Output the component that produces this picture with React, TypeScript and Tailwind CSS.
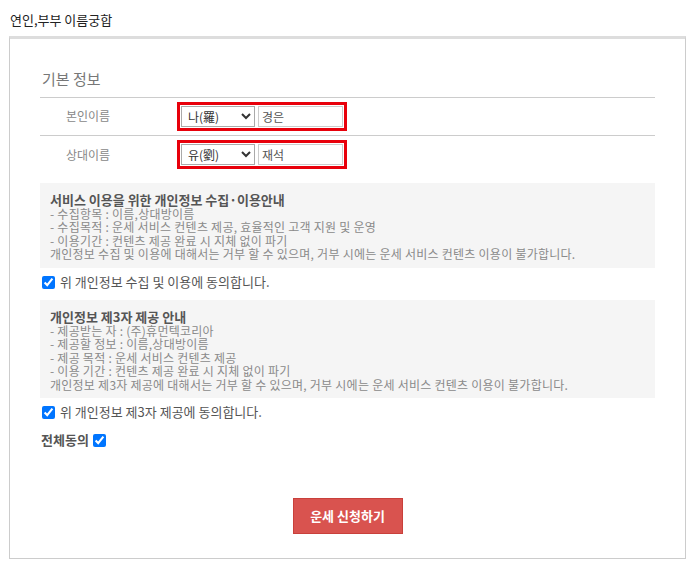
import { useState } from 'react';

const font = { fontFamily: '"Noto Sans CJK KR", "Noto Sans", sans-serif' };

function NameRow({ label, sel, options, value, last }: { label: string; sel: string; options: string[]; value: string; last?: boolean }) {
  return (
    <div className={`flex items-center h-[38px] ${last ? '' : 'border-b border-[#ccc]'}`}>
      <div className="w-[137px] pl-[26px] text-[12px] text-[#888]">{label}</div>
      <div className="flex items-center gap-[3px] border-[3px] border-[#e8000b] px-[1px] py-[1px]">
        <select
          defaultValue={sel}
          className="w-[74px] h-[21px] border border-[#aaa] bg-white text-[12px] text-[#333] pl-[2px]"
          style={font}
        >
          {options.map((o) => (
            <option key={o}>{o}</option>
          ))}
        </select>
        <input
          defaultValue={value}
          className="w-[85px] h-[21px] border border-[#ccc] px-[3px] text-[12px] text-[#555] outline-none"
          style={font}
        />
      </div>
    </div>
  );
}

function Check({ checked, onChange }: { checked: boolean; onChange: () => void }) {
  return (
    <input
      type="checkbox"
      checked={checked}
      onChange={onChange}
      className="w-[13px] h-[13px] m-0 accent-[#0075ff]"
    />
  );
}

export default function App() {
  const [a, setA] = useState(true);
  const [b, setB] = useState(true);
  const all = a && b;

  return (
    <div className="w-[700px] h-[571px] bg-white text-[#333]" style={font}>
      <div className="px-[10px] pt-[10px] h-[36px] text-[13px] text-[#222]">연인,부부 이름궁합</div>

      <div className="mx-[9px] w-[677px] h-[523px] border border-[#ccc] border-t-[3px] border-t-[#ddd] px-[30px]">
        <div className="pt-[29px] pb-[6px] pl-[2px] text-[15px] text-[#777]">기본 정보</div>
        <div className="border-t border-[#ccc]">
          <NameRow label="본인이름" sel="나(羅)" options={['나(羅)', '김(金)', '이(李)']} value="경은" />
          <NameRow label="상대이름" sel="유(劉)" options={['유(劉)', '김(金)', '이(李)']} value="재석" last />
        </div>

        <div className="mt-[9px] bg-[#f5f5f5] px-[10px] pt-[10px] pb-[7px] text-[12px] leading-[13.5px] tracking-[0.25px] text-[#8a8a8a]">
          <div className="text-[13px] leading-[14px] tracking-normal font-bold text-[#555]">서비스 이용을 위한 개인정보 수집·이용안내</div>
          <div>- 수집항목 : 이름,상대방이름</div>
          <div>- 수집목적 : 운세 서비스 컨텐츠 제공, 효율적인 고객 지원 및 운영</div>
          <div>- 이용기간 : 컨텐츠 제공 완료 시 지체 없이 파기</div>
          <div>개인정보 수집 및 이용에 대해서는 거부 할 수 있으며, 거부 시에는 운세 서비스 컨텐츠 이용이 불가합니다.</div>
        </div>

        <label className="flex items-center gap-[5px] h-[32px] pb-[3px] pl-[2px] text-[13px] text-[#555]">
          <Check checked={a} onChange={() => setA(!a)} />
          위 개인정보 수집 및 이용에 동의합니다.
        </label>

        <div className="bg-[#f5f5f5] px-[10px] pt-[10px] pb-[7px] text-[12px] leading-[13.5px] tracking-[0.25px] text-[#8a8a8a]">
          <div className="text-[13px] leading-[14px] tracking-normal font-bold text-[#555]">개인정보 제3자 제공 안내</div>
          <div>- 제공받는 자 : (주)휴먼텍코리아</div>
          <div>- 제공할 정보 : 이름,상대방이름</div>
          <div>- 제공 목적 : 운세 서비스 컨텐츠 제공</div>
          <div>- 이용 기간 : 컨텐츠 제공 완료 시 지체 없이 파기</div>
          <div>개인정보 제3자 제공에 대해서는 거부 할 수 있으며, 거부 시에는 운세 서비스 컨텐츠 이용이 불가합니다.</div>
        </div>

        <label className="flex items-center gap-[5px] h-[28px] pl-[2px] text-[13px] text-[#555]">
          <Check checked={b} onChange={() => setB(!b)} />
          위 개인정보 제3자 제공에 동의합니다.
        </label>

        <label className="flex items-center gap-[4px] h-[28px] pl-[1px] text-[13px] font-bold text-[#555]">
          전체동의
          <Check
            checked={all}
            onChange={() => {
              setA(!all);
              setB(!all);
            }}
          />
        </label>

        <div className="flex justify-center pt-[44px]">
          <button className="w-[110px] h-[36px] bg-[#d9534f] border border-[#c9403b] text-white text-[13px] font-bold">
            운세 신청하기
          </button>
        </div>
      </div>
    </div>
  );
}
